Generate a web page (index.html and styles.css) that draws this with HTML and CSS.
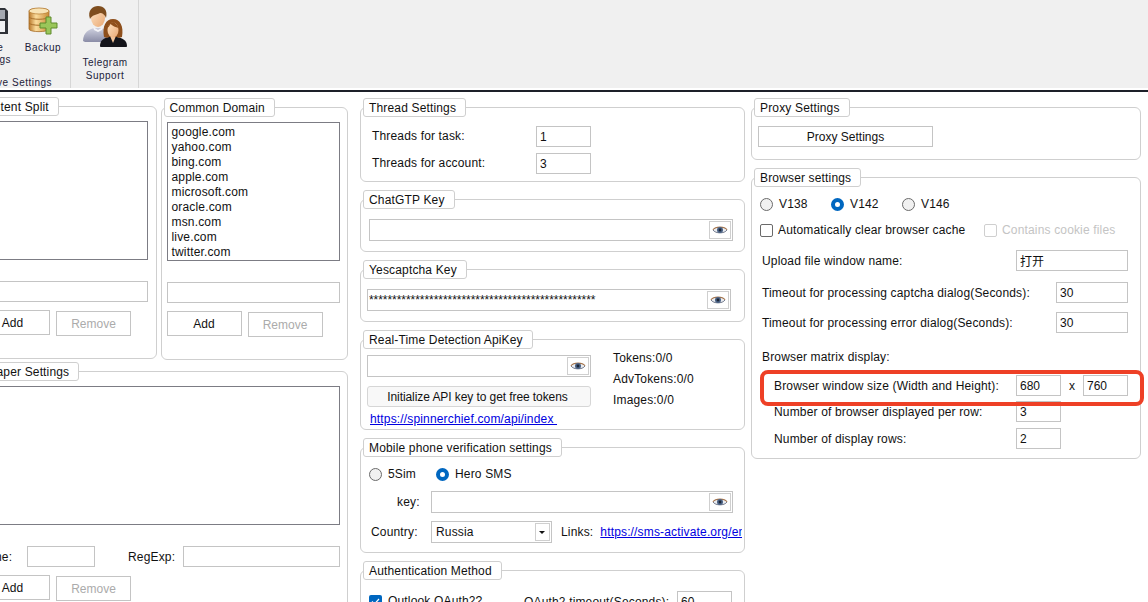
FILE: index.html
```html
<!DOCTYPE html>
<html lang="en">
<head>
    <meta charset="UTF-8">
    <meta name="viewport" content="width=device-width, initial-scale=1.0">
    <title>Settings</title>
    <link rel="stylesheet" href="styles.css">
</head>
<body>
    <svg class="defs" width="0" height="0">
        <defs>
            <linearGradient id="dbGold" x1="0" x2="1" y1="0" y2="0">
                <stop offset="0" stop-color="#b9782c"/>
                <stop offset="0.35" stop-color="#fbdc9c"/>
                <stop offset="1" stop-color="#c98a35"/>
            </linearGradient>
            <linearGradient id="shirtGrey" x1="0" x2="0" y1="0" y2="1">
                <stop offset="0" stop-color="#cfd1e0"/>
                <stop offset="1" stop-color="#8a8ca6"/>
            </linearGradient>
            <linearGradient id="skin" x1="0" x2="1" y1="0" y2="1">
                <stop offset="0" stop-color="#fde3c4"/>
                <stop offset="1" stop-color="#eaa873"/>
            </linearGradient>
            <symbol id="eye" viewBox="0 0 16 10">
                <path d="M1 5C3.5 1.2 12.5 1.2 15 5" fill="none" stroke="#a5764f" stroke-width="1.3"/>
                <path d="M1 5C3.5 8.8 12.5 8.8 15 5" fill="#dfe3ea" stroke="#6c7488" stroke-width="1"/>
                <path d="M1.5 5C4 2.4 12 2.4 14.5 5C12 7.6 4 7.6 1.5 5Z" fill="#e8ebf0"/>
                <circle cx="8" cy="5" r="3" fill="#4a6285"/>
                <circle cx="8" cy="5" r="1.4" fill="#1d2636"/>
            </symbol>
        </defs>
    </svg>

    <header class="ribbon">
        <section class="ribbon-group save-group">
            <div class="ribbon-buttons">
                <div class="ribbon-btn save-btn">
                    <svg class="ribbon-icon" width="30" height="26" viewBox="0 0 30 26">
                        <path d="M0 0h27l3 3v23H0z" fill="#2f3238"/>
                        <rect x="4" y="2" width="23" height="9" fill="#a4a8b0"/>
                        <rect x="4" y="13" width="23" height="11" fill="#f1f2f4"/>
                    </svg>
                    <span>Save<br>Settings</span>
                </div>
                <div class="ribbon-btn backup-btn">
                    <svg class="ribbon-icon" width="30" height="28" viewBox="0 0 30 28">
                        <path d="M1 4C1 0.5 21 0.5 21 4V22C21 25.5 1 25.5 1 22Z" fill="url(#dbGold)" stroke="#a86f2a" stroke-width="0.8"/>
                        <ellipse cx="11" cy="4" rx="10" ry="3" fill="#f8e3b5" stroke="#b57b30" stroke-width="0.7"/>
                        <path d="M1 10C3 13 19 13 21 10M1 16C3 19 19 19 21 16" fill="none" stroke="#a86f2a" stroke-width="1"/>
                        <path d="M18 10h5v6h6v5h-6v6h-5v-6h-6v-5h6z" fill="#9ac65a" stroke="#5f8b2c" stroke-width="1"/>
                    </svg>
                    <span>Backup</span>
                </div>
            </div>
            <div class="ribbon-caption">Save Settings</div>
        </section>
        <section class="ribbon-group support-group">
            <div class="ribbon-btn support-btn">
                <svg class="ribbon-icon" width="44" height="42" viewBox="0 0 44 42">
                    <path d="M0 36C0 27 7 24 11 23h7c5 1 8 3 8 10v4H2Z" fill="url(#shirtGrey)"/>
                    <path d="M10 22l5 3 5-3-1 3-4 2-4-2z" fill="#f4f4f8"/>
                    <ellipse cx="15" cy="13" rx="7" ry="9" fill="url(#skin)"/>
                    <path d="M7 14C4 5 10 1 15 1c6 0 10 4 8 12-1-3-3-5-6-5-4 2-8 2-10 6Z" fill="#7e4d1e"/>
                    <path d="M17 41c0-6 4-8 9-9h8c5 1 10 3 10 9 0 1-1 1-1 1H18s-1 0-1-1Z" fill="#14141a"/>
                    <path d="M27 31l3 7 3-7z" fill="#f2c49a"/>
                    <path d="M21 32C19 21 23 14 30 14s11 7 9 18c-2 1-4 1-5 0H26c-1 1-3 1-5 0Z" fill="#8e4f1c"/>
                    <ellipse cx="30" cy="25" rx="5.5" ry="7.5" fill="url(#skin)"/>
                    <path d="M24.5 23c1-4 3-6 6-6 2 1 4 3 5 6-3-1-6-2-8-4-1 2-2 3-3 4Z" fill="#8e4f1c"/>
                </svg>
                <span>Telegram<br>Support</span>
            </div>
        </section>
    </header>
    <div class="ribbon-line"></div>

    <main class="workspace">
        <div class="column column-left">
            <div class="split-row">
                <section class="group group-list group-split">
                    <div class="legend">Content Split</div>
                    <div class="list-body">
                        <div class="listbox"></div>
                        <input class="field list-input" type="text">
                        <div class="btn-row">
                            <button class="btn">Add</button>
                            <button class="btn btn-off">Remove</button>
                        </div>
                    </div>
                </section>
                <section class="group group-list">
                    <div class="legend">Common Domain</div>
                    <div class="list-body">
                        <ul class="listbox">
                            <li>google.com</li>
                            <li>yahoo.com</li>
                            <li>bing.com</li>
                            <li>apple.com</li>
                            <li>microsoft.com</li>
                            <li>oracle.com</li>
                            <li>msn.com</li>
                            <li>live.com</li>
                            <li>twitter.com</li>
                        </ul>
                        <input class="field list-input" type="text">
                        <div class="btn-row">
                            <button class="btn">Add</button>
                            <button class="btn btn-off">Remove</button>
                        </div>
                    </div>
                </section>
            </div>
            <section class="group group-scraper">
                <div class="legend">Scraper Settings</div>
                <div class="list-body">
                    <div class="listbox listbox-wide"></div>
                    <div class="regexp-row">
                        <label class="name-label">Name:</label>
                        <input class="field name-input" type="text">
                        <label class="regexp-label">RegExp:</label>
                        <input class="field regexp-input" type="text">
                    </div>
                    <div class="btn-row">
                        <button class="btn">Add</button>
                        <button class="btn btn-off">Remove</button>
                    </div>
                </div>
            </section>
        </div>

        <div class="column column-middle">
            <section class="group group-thread">
                <div class="legend">Thread Settings</div>
                <div class="thread-body">
                    <div class="row"><label class="thread-label">Threads for task:</label><input class="field thread-input" type="text" value="1"></div>
                    <div class="row"><label class="thread-label">Threads for account:</label><input class="field thread-input" type="text" value="3"></div>
                </div>
            </section>
            <section class="group group-key">
                <div class="legend">ChatGTP Key</div>
                <div class="key-body chat-body">
                    <div class="key-field">
                        <input class="key-input" type="text">
                        <span class="eye-btn"><svg width="16" height="10"><use href="#eye"/></svg></span>
                    </div>
                </div>
            </section>
            <section class="group group-key">
                <div class="legend">Yescaptcha Key</div>
                <div class="key-body captcha-body">
                    <div class="key-field">
                        <input class="key-input" type="text" value="*************************************************">
                        <span class="eye-btn"><svg width="16" height="10"><use href="#eye"/></svg></span>
                    </div>
                </div>
            </section>
            <section class="group group-realtime">
                <div class="legend">Real-Time Detection ApiKey</div>
                <div class="realtime-body">
                    <div class="realtime-main">
                        <div class="key-field">
                            <input class="key-input" type="text">
                            <span class="eye-btn"><svg width="16" height="10"><use href="#eye"/></svg></span>
                        </div>
                        <button class="init-btn">Initialize API key to get free tokens</button>
                        <a class="link api-link" href="#">https://spinnerchief.com/api/index&nbsp;</a>
                    </div>
                    <div class="token-stats">
                        <div>Tokens:0/0</div>
                        <div>AdvTokens:0/0</div>
                        <div>Images:0/0</div>
                    </div>
                </div>
            </section>
            <section class="group group-mobile">
                <div class="legend">Mobile phone verification settings</div>
                <div class="mobile-body">
                    <div class="row choice-row">
                        <label class="choice sim-choice"><input type="radio" name="sms">5Sim</label>
                        <label class="choice"><input type="radio" name="sms" checked>Hero SMS</label>
                    </div>
                    <div class="row">
                        <label class="mobile-label key-label">key:</label>
                        <div class="key-field mobile-key">
                            <input class="key-input" type="text">
                            <span class="eye-btn"><svg width="16" height="10"><use href="#eye"/></svg></span>
                        </div>
                    </div>
                    <div class="row">
                        <label class="mobile-label country-label">Country:</label>
                        <div class="select-box">
                            <span class="select-value">Russia</span>
                            <span class="select-arrow"></span>
                        </div>
                        <span class="links-label">Links:</span>
                        <a class="link sms-link" href="#">https://sms-activate.org/en</a>
                    </div>
                </div>
            </section>
            <section class="group group-auth">
                <div class="legend">Authentication Method</div>
                <div class="row auth-row">
                    <label class="choice auth-choice"><input type="checkbox" checked>Outlook OAuth2?</label>
                    <label class="auth-label">OAuth2 timeout(Seconds):</label>
                    <input class="field thread-input" type="text" value="60">
                </div>
            </section>
        </div>

        <div class="column column-right">
            <section class="group group-proxy">
                <div class="legend">Proxy Settings</div>
                <button class="btn proxy-btn">Proxy Settings</button>
            </section>
            <section class="group group-browser">
                <div class="legend">Browser settings</div>
                <div class="browser-body">
                    <div class="row version-row">
                        <label class="choice version"><input type="radio" name="ver">V138</label>
                        <label class="choice version"><input type="radio" name="ver" checked>V142</label>
                        <label class="choice version"><input type="radio" name="ver">V146</label>
                    </div>
                    <div class="row cache-row">
                        <label class="choice cache-choice"><input type="checkbox">Automatically clear browser cache</label>
                        <label class="choice choice-off"><input type="checkbox" disabled>Contains cookie files</label>
                    </div>
                    <div class="row upload-row">
                        <label class="label-wide">Upload file window name:</label>
                        <input class="field upload-input" type="text" value="打开">
                    </div>
                    <div class="row timeout-row">
                        <label class="label-timeout">Timeout for processing captcha dialog(Seconds):</label>
                        <input class="field timeout-input" type="text" value="30">
                    </div>
                    <div class="row timeout-row-2">
                        <label class="label-timeout">Timeout for processing error dialog(Seconds):</label>
                        <input class="field timeout-input" type="text" value="30">
                    </div>
                    <div class="matrix-title">Browser matrix display:</div>
                    <div class="row size-row">
                        <label class="label-wide label-indent">Browser window size (Width and Height):</label>
                        <input class="field size-input" type="text" value="680">
                        <span class="size-x">x</span>
                        <input class="field size-input" type="text" value="760">
                        <div class="highlight"></div>
                    </div>
                    <div class="row per-row">
                        <label class="label-wide label-indent">Number of browser displayed per row:</label>
                        <input class="field size-input" type="text" value="3">
                    </div>
                    <div class="row rows-row">
                        <label class="label-wide label-indent">Number of display rows:</label>
                        <input class="field size-input" type="text" value="2">
                    </div>
                </div>
            </section>
        </div>
    </main>
</body>
</html>
```

FILE: styles.css
```css
* {
    box-sizing: border-box;
}

html, body {
    margin: 0;
    padding: 0;
    width: 1148px;
    height: 602px;
    overflow: hidden;
    background-color: #fff;
    color: #111;
    font-family: "Liberation Sans", Arial, "Noto Sans CJK SC", sans-serif;
    font-size: 12px;
    letter-spacing: 0.16px;
}

.defs {
    display: block;
    height: 0;
}

/* ribbon */
.ribbon {
    display: flex;
    height: 88px;
    background-color: #f0f0f0;
    color: #1c1c3a;
    font-size: 10px;
    letter-spacing: 0.5px;
}

.ribbon-group {
    border-right: 1px solid #d6d6d6;
}

.save-group {
    width: 105px;
    margin-left: -34px;
}

.support-group {
    width: 68px;
}

.ribbon-buttons {
    display: flex;
    height: 77px;
}

.ribbon-btn {
    display: flex;
    flex-direction: column;
    align-items: center;
    text-align: center;
    line-height: 12px;
}

.save-btn {
    width: 50px;
    padding-top: 8px;
}

.save-btn .ribbon-icon {
    margin: 0 0 8px 3px;
}

.backup-btn {
    width: 54px;
    padding-top: 7px;
}

.backup-btn .ribbon-icon {
    margin-bottom: 7px;
}

.support-btn {
    padding: 5px 0 0 1px;
    line-height: 13px;
}

.support-btn .ribbon-icon {
    margin-bottom: 9px;
}

.ribbon-caption {
    text-align: center;
    line-height: 12px;
}

.ribbon-line {
    height: 2px;
    margin-top: 2px;
    background-color: #1d2029;
}

/* page columns */
.workspace {
    display: flex;
    align-items: flex-start;
    padding-top: 15px;
    margin-left: -31px;
}

.column {
    flex: none;
}

.column-left {
    width: 379px;
}

.column-middle {
    width: 385px;
    margin-left: 12px;
}

.column-right {
    width: 390px;
    margin-left: 6px;
}

.column-middle .group + .group,
.column-right .group + .group {
    margin-top: 17px;
}

/* group box with a tab-like title on its border */
.group {
    border: 1px solid #cfcfcf;
    border-radius: 6px;
}

.legend {
    width: fit-content;
    height: 19px;
    margin: -10px 0 0 2px;
    padding: 0 9px 0 5px;
    border: 1px solid #cfcfcf;
    border-radius: 3px;
    background-color: #fff;
    line-height: 19px;
    white-space: nowrap;
}

.field {
    height: 21px;
    padding: 0 3px;
    border: 1px solid #c4c4c4;
    background-color: #fff;
    color: #111;
    font: inherit;
    outline: none;
}

.row {
    display: flex;
    align-items: center;
}

.link {
    color: #0000e0;
    text-decoration: underline;
    white-space: nowrap;
}

.btn {
    width: 75px;
    height: 25px;
    padding: 0;
    border: 1px solid #c4c4c4;
    background-color: #fff;
    color: #111;
    font: inherit;
}

.btn-off {
    margin-top: 1px;
    margin-left: 6px;
    color: #ababab;
}

/* left column */
.split-row {
    display: flex;
    gap: 4px;
    align-items: flex-start;
}

.group-list {
    width: 188px;
    height: 253px;
}

.group-split {
    margin-top: -1px;
    height: 253px;
}

.list-body {
    padding: 5px 0 0 5px;
}

.listbox {
    display: block;
    width: 173px;
    height: 139px;
    margin: 0;
    padding: 2px 0 0 4px;
    border: 1px solid #7c7c84;
    list-style: none;
    line-height: 15px;
}

.listbox-wide {
    width: 365px;
}

.list-input {
    display: block;
    width: 173px;
    margin-top: 21px;
}

.btn-row {
    display: flex;
    align-items: flex-start;
    margin-top: 8px;
}

.group-scraper {
    height: 260px;
    margin-top: 11px;
}

.regexp-row {
    display: flex;
    align-items: center;
    margin-top: 21px;
}

.name-label {
    width: 52px;
    padding-left: 1px;
}

.name-input {
    width: 68px;
}

.regexp-label {
    width: 55px;
    margin-left: 33px;
}

.regexp-input {
    width: 157px;
}

/* middle column */
.group-thread {
    height: 75px;
}

.thread-body {
    display: flex;
    flex-direction: column;
    gap: 6px;
    padding: 9px 0 0 11px;
}

.thread-label {
    width: 164px;
    padding-bottom: 2px;
}

.thread-input {
    width: 55px;
    padding-top: 1px;
}

.group-key {
    height: 53px;
}

.key-body {
    padding-top: 10px;
}

.chat-body {
    padding-left: 8px;
}

.chat-body .key-field {
    width: 364px;
}

.captcha-body {
    padding-left: 6px;
}

.captcha-body .key-field {
    width: 364px;
}

.key-field {
    display: flex;
    align-items: center;
    height: 22px;
    padding-right: 1px;
    border: 1px solid #c4c4c4;
    background-color: #fff;
}

.key-input {
    flex: 1;
    min-width: 0;
    height: 18px;
    padding: 0 0 0 1px;
    border: none;
    color: #111;
    font: inherit;
    letter-spacing: -0.05px;
    outline: none;
}

.eye-btn {
    display: flex;
    flex: none;
    align-items: center;
    justify-content: center;
    width: 22px;
    height: 18px;
    border: 1px solid #cfcfcf;
}

.group-realtime {
    height: 91px;
}

.realtime-body {
    display: flex;
    padding: 6px 0 0 6px;
}

.realtime-main {
    display: flex;
    flex-direction: column;
    width: 224px;
}

.init-btn {
    height: 21px;
    margin-top: 9px;
    padding: 0 3px 0 0;
    border: 1px solid #d6d6d6;
    border-radius: 3px;
    background-color: #f8f8f8;
    color: #111;
    font: inherit;
    letter-spacing: -0.08px;
}

.api-link {
    margin: 5px 0 0 3px;
    line-height: 14px;
}

.token-stats {
    margin: -7px 0 0 22px;
    line-height: 21px;
}

.group-mobile {
    height: 106px;
}

.mobile-body {
    display: flex;
    flex-direction: column;
    padding: 9px 0 0 8px;
}

.choice-row {
    height: 16px;
    margin-bottom: 9px;
}

.choice {
    display: flex;
    align-items: center;
    white-space: nowrap;
}

.choice input {
    flex: none;
    width: 13px;
    height: 13px;
    margin: 0 6px 0 0;
    border: 1px solid #6a6a6a;
    background-color: #f1f1f1;
    appearance: none;
}

.choice input[type="radio"] {
    border-radius: 50%;
}

.choice input[type="radio"]:checked {
    border: 4px solid #0067c0;
    background-color: #fff;
}

.choice input[type="checkbox"] {
    border-radius: 2px;
    background-color: #fff;
}

.choice input[type="checkbox"]:checked {
    border: none;
    background: #0067c0 url("data:image/svg+xml,%3Csvg xmlns='http://www.w3.org/2000/svg' width='13' height='13'%3E%3Cpath d='M3 6.5l2.5 2.5L10 4' fill='none' stroke='white' stroke-width='1.2'/%3E%3C/svg%3E");
}

.sim-choice {
    margin-right: 20px;
}

.mobile-label {
    width: 62px;
}

.key-label {
    padding-left: 28px;
}

.country-label {
    padding-left: 2px;
}

.mobile-key {
    width: 302px;
}

.mobile-body .row + .row {
    margin-bottom: 8px;
}

.select-box {
    display: flex;
    align-items: center;
    justify-content: space-between;
    flex: none;
    width: 121px;
    height: 22px;
    padding: 0 1px 0 4px;
    border: 1px solid #c4c4c4;
}

.select-arrow {
    position: relative;
    width: 15px;
    height: 18px;
    border: 1px solid #cfcfcf;
}

.select-arrow::after {
    content: "";
    position: absolute;
    top: 7px;
    left: 3px;
    border-style: solid;
    border-width: 3px 3px 0;
    border-color: #111 transparent transparent;
}

.links-label {
    margin-left: 9px;
}

.sms-link {
    width: 142px;
    margin-left: 7px;
    overflow: hidden;
}

.group-auth {
    height: 80px;
}

.auth-row {
    align-items: flex-start;
    padding: 11px 0 0 8px;
}

.auth-choice {
    width: 155px;
    margin-top: 3px;
}

.auth-label {
    width: 153px;
    margin-top: 4px;
}

/* right column */
.group-proxy {
    height: 53px;
}

.proxy-btn {
    display: block;
    width: 175px;
    height: 21px;
    margin: 9px 0 0 6px;
}

.group-browser {
    height: 282px;
}

.browser-body {
    padding: 9px 0 0 10px;
}

.version-row {
    height: 16px;
    margin-left: -2px;
}

.version {
    width: 71px;
}

.cache-row {
    height: 16px;
    margin: 10px 0 0 -2px;
}

.cache-choice {
    width: 224px;
}

.cache-row input[type="checkbox"] {
    margin-right: 5px;
}

.choice-off {
    color: #c4c4c4;
}

.choice-off input {
    border-color: #cfcfcf;
}

.label-wide {
    flex: none;
    width: 254px;
}

.label-indent {
    padding-left: 12px;
}

.label-timeout {
    flex: none;
    width: 294px;
}

.upload-row {
    margin-top: 12px;
}

.upload-input {
    width: 112px;
}

.timeout-row {
    margin-top: 11px;
}

.timeout-row-2 {
    margin-top: 9px;
}

.timeout-input {
    width: 72px;
}

.matrix-title {
    margin-top: 17px;
    line-height: 14px;
}

.size-row {
    position: relative;
    margin-top: 11px;
}

.size-input {
    flex: none;
    width: 45px;
}

.size-x {
    width: 22px;
    text-align: center;
}

.per-row {
    margin-top: 5px;
}

.rows-row {
    margin-top: 6px;
}

.highlight {
    position: absolute;
    top: -5px;
    left: -2px;
    width: 384px;
    height: 36px;
    border: 4px solid #ee4026;
    border-radius: 8px;
}
```
